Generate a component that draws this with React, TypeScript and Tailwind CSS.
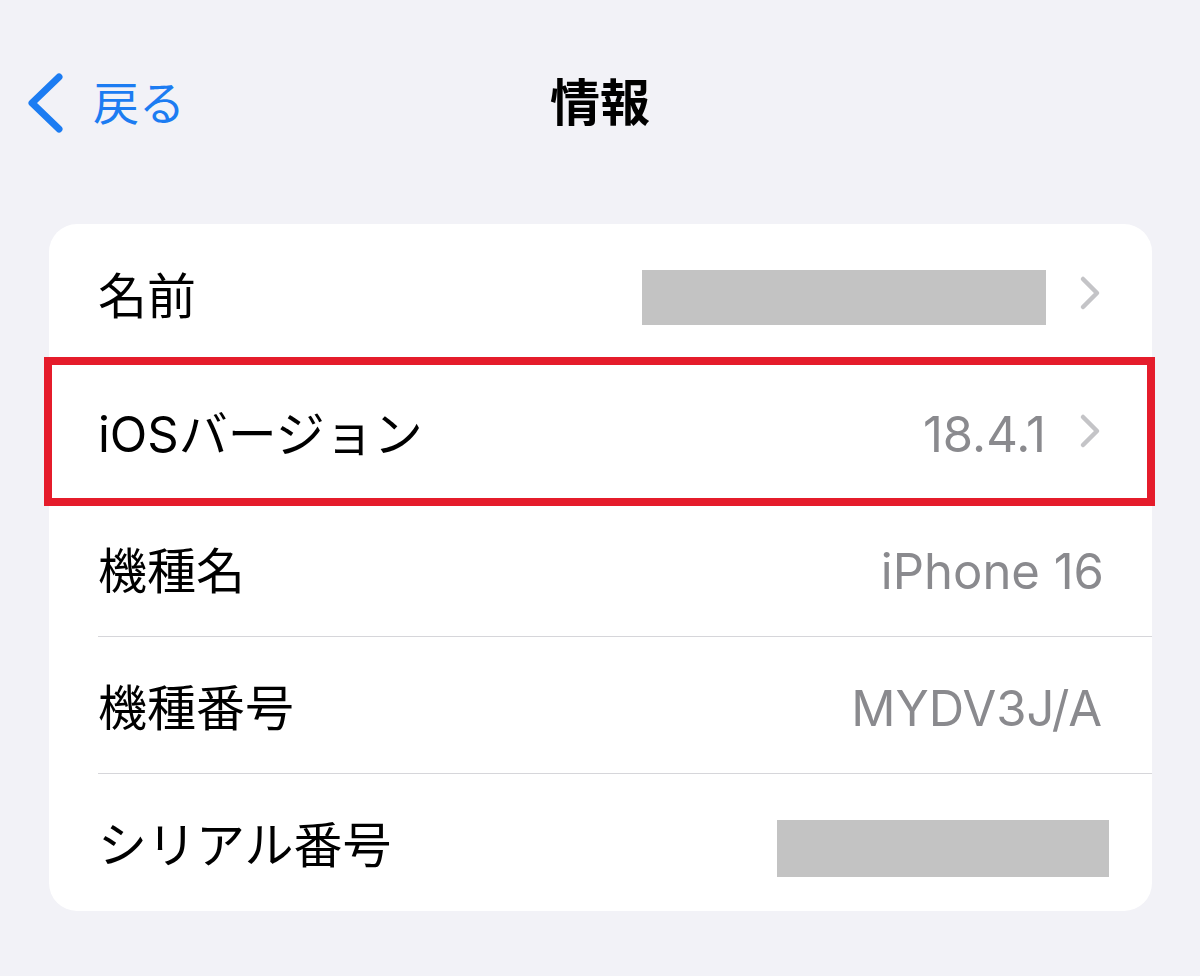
import type { ReactNode } from 'react';

// iOS "情報" settings screen — one grouped card with five rows

const FONT = 'font-["Inter","Noto_Sans_CJK_JP",sans-serif]';

function ChevronRight() {
  return (
    <svg width="24" height="38" viewBox="0 0 24 38" fill="none" className="ml-[32px] shrink-0">
      <path d="M5 5L19 19L5 33" stroke="#c4c4c7" strokeWidth={4.5} strokeLinecap="round" strokeLinejoin="round" />
    </svg>
  );
}

function Row({
  label,
  first,
  children,
  className = 'pr-[50px]',
  height = 'h-[136px]',
}: {
  label: string;
  first?: boolean;
  children?: ReactNode;
  className?: string;
  height?: string;
}) {
  return (
    <div className={`ml-[49px] ${first ? '' : 'border-t border-[#d6d6da]'}`}>
      <div className={`flex items-center justify-between ${height} ${className}`}>
        <span className="text-[49px] leading-none text-black pt-[6px]">{label}</span>
        <div className="flex items-center">{children}</div>
      </div>
    </div>
  );
}

function Value({ children }: { children: ReactNode }) {
  return <span className="text-[49px] leading-none text-[#8a8a8e] pt-[6px]">{children}</span>;
}

export default function App() {
  return (
    <div className={`min-h-screen w-full bg-[#f2f2f7] ${FONT}`}>
      {/* Nav bar */}
      <div className="grid grid-cols-[1fr_auto_1fr] items-center h-[206px]">
        <div className="flex items-center pl-[24px]">
          <svg width="40" height="64" viewBox="0 0 40 64" fill="none">
            <path d="M35 6L8 32L35 58" stroke="#1c7cf2" strokeWidth={7} strokeLinecap="round" strokeLinejoin="round" />
          </svg>
          <span className="ml-[29px] text-[46px] leading-none text-[#1c7cf2]">戻る</span>
        </div>
        <h1 className="text-[50px] leading-none font-bold text-black">情報</h1>
        <div />
      </div>

      {/* Card */}
      <div className="relative mt-[18px] ml-[49px] mr-[48px]">
        <div className="bg-white rounded-[28px] pb-[1px]">
          <Row label="名前" first height="h-[138px]">
            <div className="w-[404px] h-[55px] bg-[#c3c3c3] mt-[9px]" />
            <ChevronRight />
          </Row>
          <Row label="iOSバージョン">
            <Value>18.4.1</Value>
            <ChevronRight />
          </Row>
          <Row label="機種名" className="pr-[48px]">
            <Value>iPhone 16</Value>
          </Row>
          <Row label="機種番号" className="pr-[50px]">
            <Value>MYDV3J/A</Value>
          </Row>
          <Row label="シリアル番号" className="pr-[43px]">
            <div className="w-[332px] h-[57px] bg-[#c3c3c3] mt-[12px]" />
          </Row>
        </div>

        {/* Highlight annotation */}
        <div className="absolute left-[-5px] right-[-3px] top-[133px] h-[149px] border-[8px] border-[#e51c2b] pointer-events-none" />
      </div>
    </div>
  );
}
